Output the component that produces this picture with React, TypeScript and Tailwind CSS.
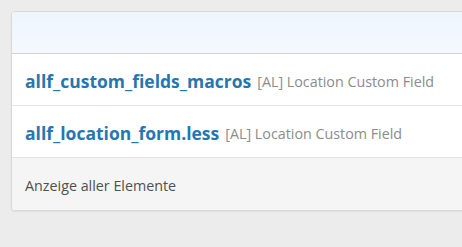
const font = { fontFamily: '"Open Sans", "Noto Sans", sans-serif' }

const rows = [
  { title: 'allf_custom_fields_macros', hint: '[AL] Location Custom Field' },
  { title: 'allf_location_form.less', hint: '[AL] Location Custom Field' },
]

export default function App() {
  return (
    <div className="h-[247px] w-[462px] overflow-hidden bg-[#ececec] pl-[11px] pt-[11px]" style={font}>
      <div className="w-[470px] overflow-hidden rounded-[4px] border border-[#d8d8d8] bg-white shadow-[0_1px_2px_rgba(0,0,0,0.06)]">
        <div className="h-[42px] border-b border-[#d3d3d3] bg-gradient-to-b from-[#edf5fd] to-[#f5f9fe]" />
        {rows.map((r) => (
          <div key={r.title} className="flex h-[52px] items-center border-b border-[#e3e3e3] pl-[13px] pt-[4px]">
            <span className="text-[17.5px] font-bold text-[#2577b1]">{r.title}</span>
            <span className="ml-[6px] text-[14.3px] text-[#8c8c8c]">{r.hint}</span>
          </div>
        ))}
        <div className="flex h-[52px] items-center bg-[#f5f5f5] pl-[13px] pt-[4px] text-[14.3px] text-[#505050]">
          Anzeige aller Elemente
        </div>
      </div>
    </div>
  )
}
